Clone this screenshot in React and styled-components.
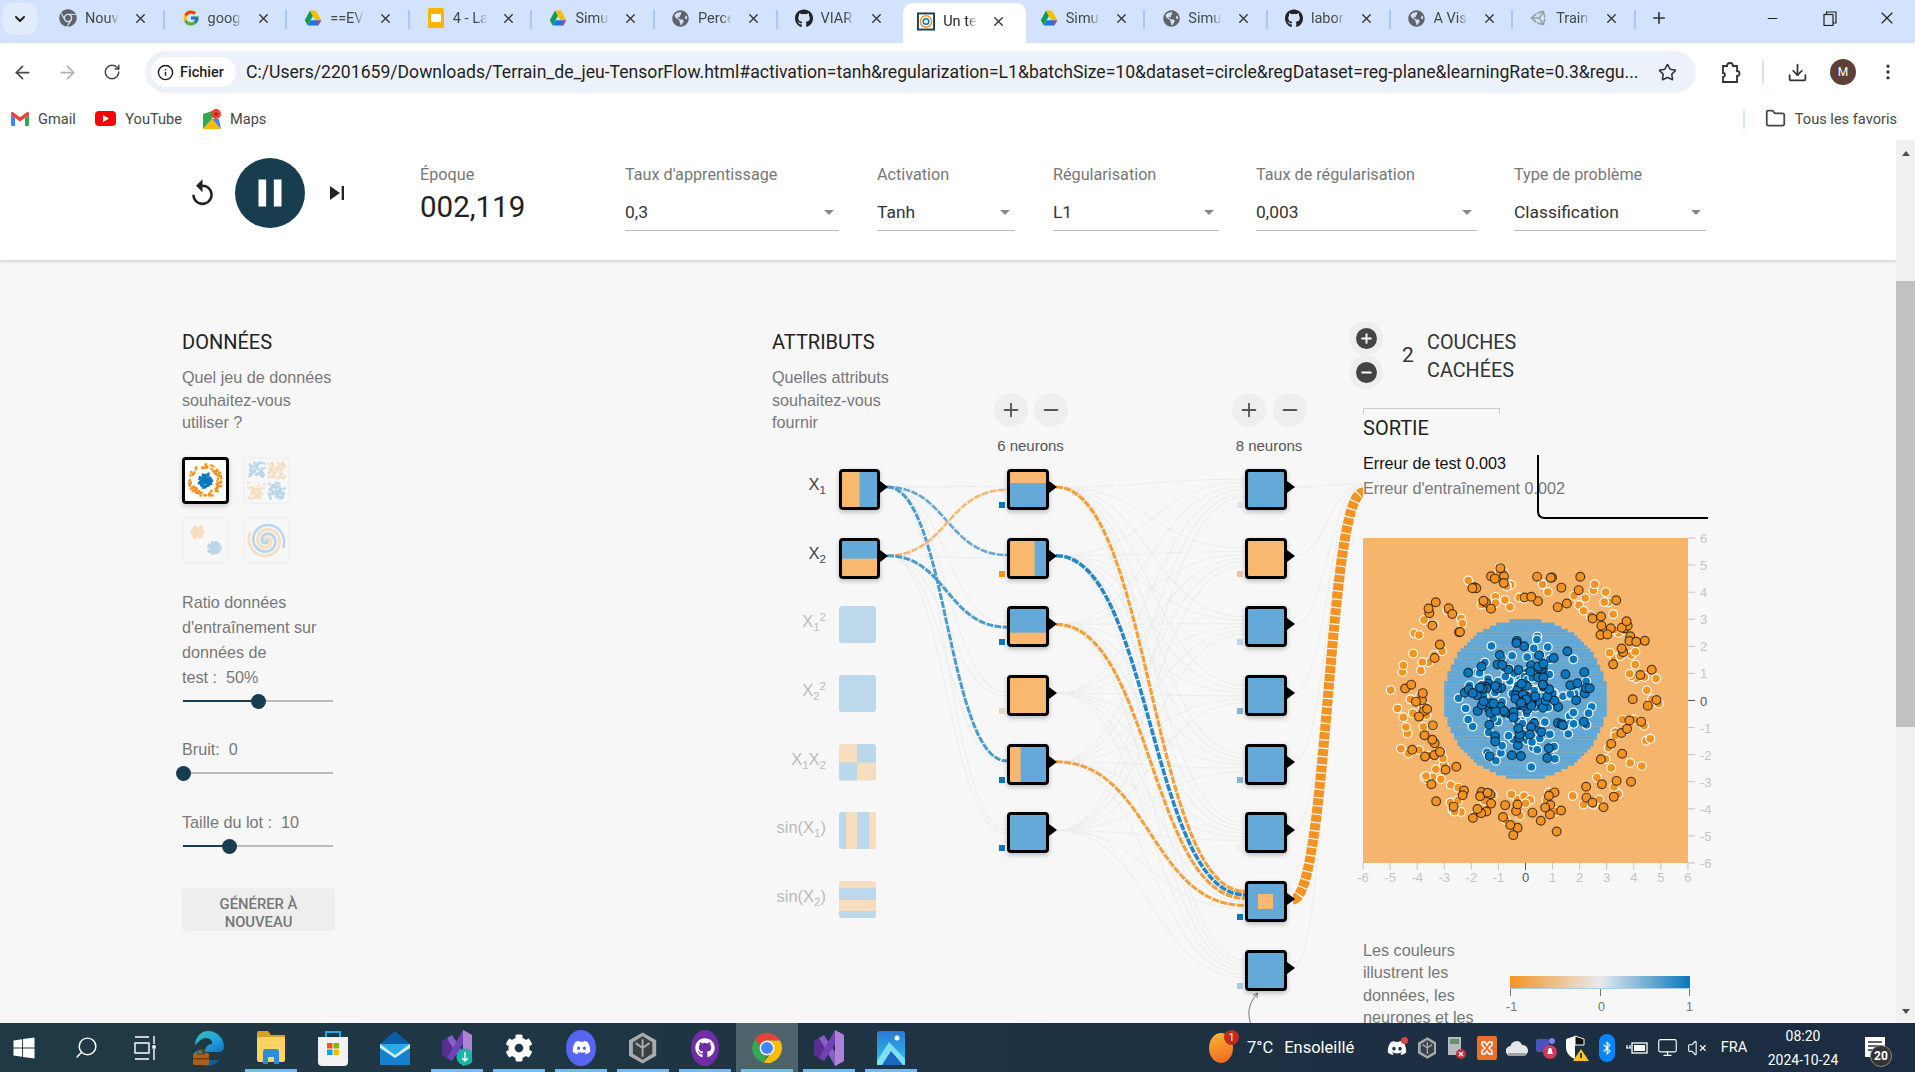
import React from "react";
import styled, { createGlobalStyle } from "styled-components";
import {
  ArrowLeft,
  ArrowRight,
  RotateCw,
  Star,
  Info,
  Download,
  MoreVertical,
  Folder,
  Plus,
  Minus,
  X as Close,
  ChevronDown,
  Search,
  VolumeX,
  Monitor,
} from "lucide-react";
import { FaGithub, FaDiscord, FaWindows, FaBluetoothB, FaUnity, FaChrome, FaCog, FaGlobeAmericas } from "react-icons/fa";
import { FcGoogle } from "react-icons/fc";
import { MdPause, MdReplay, MdSkipNext } from "react-icons/md";

const ORANGE = "#f8b86f";
const BLUE = "#64a9d7";
const DOT_ORANGE = "#f59322";
const DOT_BLUE = "#0877bd";

const seeded = (seed) => () => {
  seed = (seed * 16807) % 2147483647;
  return (seed - 1) / 2147483646;
};

const GlobalStyles = createGlobalStyle`
  html, body {
    margin: 0;
    height: 100%;
    overflow: hidden;
    background: #f7f7f7;
    font-family: "Liberation Sans", Arial, sans-serif;
  }
`;

/* browser chrome */

const Screen = styled.div`
  width: 1915px;
  height: 1072px;
  display: flex;
  flex-direction: column;
  overflow: hidden;
`;

const TabStrip = styled.div`
  height: 43px;
  flex: none;
  display: flex;
  align-items: stretch;
  background: #d3e3fd;
  position: relative;
`;

const TabSearch = styled.div`
  width: 34px;
  height: 32px;
  margin: 3px 8px 0 3px;
  border-radius: 10px;
  background: #e3ecfc;
  display: flex;
  align-items: center;
  justify-content: center;
`;

const Tab = styled.div`
  width: 122.6px;
  flex: none;
  position: relative;
  display: flex;
  align-items: center;
  padding: 0 0 7px 14px;
  box-sizing: border-box;
  font-family: Roboto, sans-serif;
  font-size: 14.5px;
  color: ${(p) => (p.$active ? "#1f1f1f" : "#474747")};
  ${(p) =>
    p.$active &&
    `background:#fff; border-radius:10px 10px 0 0; margin-top:3px; padding-bottom:4px;`}
  &::after {
    content: "";
    display: ${(p) => (p.$sep ? "block" : "none")};
    position: absolute;
    right: 3px;
    top: 10px;
    height: 19px;
    width: 2px;
    background: #a8c7fa;
  }
`;

const TabIcon = styled.span`
  width: 18px;
  height: 18px;
  flex: none;
  display: flex;
  align-items: center;
  justify-content: center;
  color: #5f6368;
`;

const TabTitle = styled.span`
  width: 34px;
  margin-left: 8px;
  overflow: hidden;
  white-space: nowrap;
  -webkit-mask-image: linear-gradient(90deg, #000 70%, transparent);
`;

const TabClose = styled.span`
  margin-left: 14px;
  display: flex;
  color: #333;
`;

const NewTab = styled.div`
  width: 28px;
  margin-left: 6px;
  padding-bottom: 7px;
  display: flex;
  align-items: center;
  justify-content: center;
  color: #333;
`;

const WindowButtons = styled.div`
  margin-left: auto;
  display: flex;
`;

const WindowButton = styled.div`
  width: 57px;
  padding-bottom: 7px;
  display: flex;
  align-items: center;
  justify-content: center;
  color: #222;
`;

const Toolbar = styled.div`
  height: 54px;
  flex: none;
  box-sizing: border-box;
  display: flex;
  align-items: center;
  padding: 4px 0 0 5px;
  background: #fff;
  color: #474747;
`;

const ToolButton = styled.div`
  width: 34px;
  height: 34px;
  flex: none;
  margin-left: ${(p) => p.$gap || 0}px;
  display: flex;
  align-items: center;
  justify-content: center;
  color: ${(p) => p.$color || "#474747"};
`;

const Omnibox = styled.div`
  width: 1551px;
  height: 42px;
  flex: none;
  margin-left: 16px;
  padding-left: 6px;
  box-sizing: border-box;
  border-radius: 21px;
  background: #edf2fa;
  display: flex;
  align-items: center;
`;

const SecurityChip = styled.div`
  width: 85px;
  height: 30px;
  flex: none;
  border-radius: 15px;
  background: #fff;
  display: flex;
  align-items: center;
  gap: 6px;
  padding-left: 6px;
  box-sizing: border-box;
  font: 500 14.5px Roboto, sans-serif;
  color: #1f1f1f;
`;

const Url = styled.div`
  width: 1394px;
  flex: none;
  margin-left: 10px;
  white-space: nowrap;
  overflow: hidden;
  font: 17.6px Roboto, sans-serif;
  color: #1f1f1f;
`;

const ToolDivider = styled.div`
  width: 2px;
  height: 24px;
  flex: none;
  margin-left: 14px;
  background: #d3e3fd;
`;

const Avatar = styled.div`
  width: 26px;
  height: 26px;
  flex: none;
  margin-left: 16px;
  border-radius: 50%;
  background: #5d4037;
  color: #fff;
  font: 12px Roboto, sans-serif;
  display: flex;
  align-items: center;
  justify-content: center;
`;

const BookmarkBar = styled.div`
  height: 43px;
  flex: none;
  display: flex;
  align-items: center;
  background: #fff;
  font: 14.6px Roboto, sans-serif;
  color: #474747;
  box-sizing: border-box;
`;

const Bookmark = styled.div`
  display: flex;
  align-items: center;
  gap: 9px;
  margin-left: ${(p) => p.$gap}px;
  margin-right: ${(p) => p.$end || 0}px;
`;

const BookmarkDivider = styled.div`
  width: 2px;
  height: 20px;
  margin-left: auto;
  background: #d3e3fd;
`;

/* page */

const PageArea = styled.div`
  flex: 1;
  min-height: 0;
  display: flex;
`;

const Page = styled.div`
  flex: 1;
  min-width: 0;
  overflow: hidden;
  background: #f7f7f7;
`;

const Scrollbar = styled.div`
  width: 19px;
  flex: none;
  background: #f1f1f1;
  display: flex;
  flex-direction: column;
  align-items: center;
`;

const ScrollArrow = styled.div`
  width: 0;
  height: 0;
  margin: ${(p) => (p.$down ? "auto 0 9px" : "11px 0 0")};
  border-left: 4px solid transparent;
  border-right: 4px solid transparent;
  ${(p) => (p.$down ? "border-top" : "border-bottom")}: 5px solid #505050;
`;

const ScrollThumb = styled.div`
  width: 100%;
  height: 446px;
  margin-top: 125px;
  background: #c1c1c1;
`;

const TopBar = styled.div`
  height: 120px;
  display: flex;
  align-items: flex-start;
  padding-left: 185px;
  background: #fff;
  box-shadow: 0 1px 4px rgba(0, 0, 0, 0.22);
  position: relative;
  font-family: Roboto, sans-serif;
`;

const ResetButton = styled.div`
  width: 34px;
  height: 106px;
  display: flex;
  align-items: center;
  justify-content: center;
  color: #222;
`;

const PlayButton = styled.div`
  width: 70px;
  height: 70px;
  margin: 18px 16px 0;
  border-radius: 50%;
  background: #183d4e;
  color: #fff;
  display: flex;
  align-items: center;
  justify-content: center;
`;

const StepButton = styled(ResetButton)`
  width: 32px;
`;

const Epoch = styled.div`
  width: 205px;
  margin-left: 67px;
  padding-top: 25px;
`;

const ControlLabel = styled.div`
  font-size: 16.2px;
  line-height: 20px;
  color: #777;
`;

const EpochValue = styled.div`
  margin-top: 4px;
  font-size: 29.5px;
  line-height: 36px;
  color: #222;
`;

const Dropdown = styled.div`
  width: ${(p) => p.$w}px;
  flex: none;
  margin-right: ${(p) => p.$gap || 0}px;
  padding-top: 25px;
`;

const DropdownValue = styled.div`
  position: relative;
  margin-top: 16px;
  height: 29px;
  font-size: 17.4px;
  line-height: 22px;
  color: #333;
  border-bottom: 1px solid #bbb;
  &::after {
    content: "";
    position: absolute;
    right: 5px;
    top: 9px;
    border-left: 5px solid transparent;
    border-right: 5px solid transparent;
    border-top: 5px solid #888;
  }
`;

const Main = styled.div`
  display: flex;
  align-items: flex-start;
  padding: 68px 0 0 182px;
`;

const Heading = styled.h4`
  margin: 0;
  height: 26px;
  font: 400 20px/28.500px Roboto, sans-serif;
  color: #222;
`;

const Intro = styled.p`
  margin: 12px 0 0;
  font-size: 16.200px;
  line-height: 22.500px;
  color: #777;
`;

const DataColumn = styled.div`
  width: 155px;
  flex: none;
`;

const ThumbGrid = styled.div`
  display: grid;
  grid-template-columns: 47px 47px;
  gap: 13px 14px;
  margin-top: 23.500px;
`;

const Thumb = styled.div`
  width: 47px;
  height: 47px;
  box-sizing: border-box;
  border-radius: 4px;
  background: ${(p) => (p.$selected ? "#fff" : "transparent")};
  border: ${(p) => (p.$selected ? "3px solid #000" : "2px solid #f1f1f1")};
  box-shadow: ${(p) => (p.$selected ? "0 2px 5px rgba(0,0,0,.2)" : "none")};
  svg {
    display: block;
    width: 100%;
    height: 100%;
    opacity: ${(p) => (p.$selected ? 1 : 0.25)};
  }
`;

const SliderLabel = styled.div`
  margin-top: ${(p) => p.$gap}px;
  font-size: 16.200px;
  line-height: 25px;
  color: #777;
`;

const SliderTrack = styled.div`
  position: relative;
  width: 150px;
  height: 16px;
  margin: 3.500px 0 0 1px;
  background: linear-gradient(#bbb, #bbb) center / 100% 2px no-repeat;
`;

const SliderFill = styled.div`
  position: absolute;
  left: 0;
  top: 7px;
  height: 2px;
  background: #183d4e;
  width: ${(p) => p.$value}%;
`;

const SliderThumb = styled.div`
  position: absolute;
  top: 0.500px;
  width: 15px;
  height: 15px;
  margin-left: -7.500px;
  border-radius: 50%;
  background: #183d4e;
  left: ${(p) => p.$value}%;
`;

const RegenButton = styled.div`
  width: 153px;
  height: 43px;
  margin-top: 34px;
  padding-top: 7px;
  box-sizing: border-box;
  border-radius: 3px;
  background: #eee;
  display: flex;
  align-items: center;
  justify-content: center;
  text-align: center;
  font: 500 14.800px/18px Roboto, sans-serif;
  color: #777;
`;

const Network = styled.div`
  position: relative;
  display: flex;
  align-items: flex-start;
  margin-left: 435px;
`;

const Links = styled.svg`
  position: absolute;
  left: 0;
  top: 0;
  overflow: visible;
`;

const FeatureColumn = styled.div`
  width: 221px;
  flex: none;
  position: relative;
`;

const FeatureIntro = styled.div`
  height: 141px;
  width: 120px;
`;

const FeatureList = styled.div`
  display: flex;
  flex-direction: column;
  gap: 27.700px;
`;

const FeatureRow = styled.div`
  height: 41px;
  display: flex;
  align-items: flex-start;
`;

const FeatureLabel = styled.div`
  width: 54px;
  margin-right: 13px;
  padding-top: 5px;
  text-align: right;
  white-space: nowrap;
  font-size: 16.500px;
  line-height: 20px;
  color: ${(p) => (p.$on ? "#444" : "#bbb")};
  sub,
  sup {
    font-size: 11.500px;
    line-height: 0;
  }
`;

const FadedNode = styled.div`
  width: 37px;
  height: 37px;
  border-radius: 3px;
  background: ${(p) => p.$fill};
  opacity: 0.4;
`;

const NodeBox = styled.div`
  position: relative;
  width: ${(p) => p.$w}px;
  height: 41px;
  flex: none;
  box-sizing: border-box;
  border: 3px solid #000;
  border-radius: 4px;
  background: ${(p) => p.$fill};
  box-shadow: 0 2px 5px rgba(0, 0, 0, 0.25);
  &::after {
    content: "";
    position: absolute;
    right: -11px;
    top: 9px;
    border-top: 6px solid transparent;
    border-bottom: 6px solid transparent;
    border-left: 8px solid #000;
  }
`;

const Core = styled.div`
  position: absolute;
  left: 10px;
  top: 10px;
  width: 15px;
  height: 15px;
  background: ${ORANGE};
  filter: blur(0.700px);
`;

const Bias = styled.div`
  position: absolute;
  left: -11px;
  bottom: -1px;
  width: 6px;
  height: 6px;
  background: ${(p) => p.$color};
`;

const LayerColumn = styled.div`
  width: ${(p) => p.$w}px;
  flex: none;
  margin-right: ${(p) => p.$gap}px;
  position: relative;
  padding-top: 65px;
`;

const LayerControls = styled.div`
  display: flex;
  justify-content: space-between;
  margin-left: 1px;
`;

const RoundButton = styled.div`
  width: 34px;
  height: 34px;
  border-radius: 50%;
  background: #eee;
  color: #555;
  display: flex;
  align-items: center;
  justify-content: center;
`;

const NeuronCount = styled.div`
  margin-top: 9px;
  text-align: center;
  font-size: 15px;
  line-height: 20px;
  color: #555;
`;

const NodeList = styled.div`
  display: flex;
  flex-direction: column;
  gap: 27.700px;
  margin: 13px 0 0 14px;
`;

const OutputColumn = styled.div`
  width: 360px;
  flex: none;
  margin: -7px 0 0 42px;
  position: relative;
`;

const HiddenHeader = styled.div`
  height: 68px;
  display: flex;
  align-items: center;
`;

const CircleStack = styled.div`
  width: 34px;
  display: flex;
  flex-direction: column;
`;

const CircleAction = styled(RoundButton)`
  color: #fff;
  span {
    width: 21px;
    height: 21px;
    border-radius: 50%;
    background: #444;
    display: flex;
    align-items: center;
    justify-content: center;
  }
`;

const LayerCount = styled.div`
  width: 38px;
  padding-left: 6px;
  text-align: center;
  font: 21px Roboto, sans-serif;
  color: #333;
`;

const LayerTitle = styled.div`
  padding-top: 4px;
  font: 19.800px/28px Roboto, sans-serif;
  color: #333;
`;

const OutputBody = styled.div`
  margin: 19px 0 0 14px;
`;

const Bracket = styled.div`
  width: 137px;
  height: 6px;
  box-sizing: border-box;
  border: 1px solid #ccc;
  border-bottom: 0;
`;

const Stats = styled.div`
  position: relative;
  margin-top: 10.500px;
  font-size: 16.200px;
  line-height: 25px;
`;

const StatLine = styled.div`
  color: ${(p) => (p.$train ? "#777" : "#111")};
  white-space: nowrap;
`;

const LossChart = styled.svg`
  position: absolute;
  left: 174px;
  top: 4px;
`;

const HeatMap = styled.svg`
  display: block;
  margin-top: 37.500px;
  overflow: visible;
  font-family: "Liberation Sans", Arial, sans-serif;
`;

const Legend = styled.div`
  display: flex;
  margin-top: 50.500px;
  height: 100px;
`;

const LegendText = styled.div`
  width: 147px;
  flex: none;
  font-size: 16.200px;
  line-height: 22.500px;
  color: #777;
`;

const LegendScale = styled.div`
  width: 180px;
  padding-top: 37px;
`;

const ColorBar = styled.div`
  height: 12px;
  background: linear-gradient(90deg, ${DOT_ORANGE}, #e8eaeb 50%, ${DOT_BLUE});
  border-bottom: 1px solid #a9cfe8;
`;

const ScaleTicks = styled.div`
  height: 7px;
  border-left: 1px solid #777;
  border-right: 1px solid #777;
  position: relative;
  &::after {
    content: "";
    position: absolute;
    left: 50%;
    top: 0;
    height: 7px;
    width: 1px;
    background: #777;
  }
`;

const ScaleLabels = styled.div`
  display: flex;
  justify-content: space-between;
  margin: 4px -3px 0 -4px;
  font-size: 12.500px;
  color: #777;
`;

/* taskbar */

const Taskbar = styled.div`
  height: 49px;
  flex: none;
  display: flex;
  align-items: stretch;
  background: linear-gradient(90deg, #203a45, #1c2c42);
  padding-right: 15px;
  font-family: Roboto, sans-serif;
  color: #fff;
`;

const SystemButton = styled.div`
  width: ${(p) => p.$w}px;
  flex: none;
  display: flex;
  align-items: center;
  justify-content: center;
`;

const MirroredSearch = styled(Search)`
  transform: scaleX(-1);
`;

const TaskApps = styled.div`
  display: flex;
  margin-left: 12px;
`;

const TaskApp = styled.div`
  width: 62px;
  flex: none;
  position: relative;
  display: flex;
  align-items: center;
  justify-content: center;
  background: ${(p) => (p.$current ? "#4c636c" : "transparent")};
  &::after {
    content: "";
    display: ${(p) => (p.$open ? "block" : "none")};
    position: absolute;
    left: 5px;
    right: 5px;
    bottom: 0;
    height: 3px;
    background: #76b9ed;
  }
`;

const Weather = styled.div`
  width: 174px;
  flex: none;
  margin-left: auto;
  display: flex;
  align-items: center;
  font-size: 16.500px;
  padding-left: 1px;
  box-sizing: border-box;
  span + span {
    margin-left: 11px;
  }
`;

const WeatherIcon = styled.div`
  position: relative;
  width: 24px;
  height: 30px;
  margin-right: 14px;
  border-radius: 50%;
  background: linear-gradient(160deg, #f7b733, #f0641e);
`;

const WeatherBadge = styled.div`
  position: absolute;
  right: -6px;
  top: -3px;
  width: 15px;
  height: 15px;
  border-radius: 50%;
  background: #c42b1c;
  font-size: 10px;
  line-height: 15px;
  text-align: center;
`;

const TrayIcon = styled.div`
  width: 30px;
  flex: none;
  position: relative;
  display: flex;
  align-items: center;
  justify-content: center;
`;

const Lang = styled.div`
  width: 44px;
  flex: none;
  align-self: center;
  text-align: center;
  font-size: 14.500px;
`;

const Clock = styled.div`
  width: 94px;
  flex: none;
  align-self: center;
  text-align: center;
  font-size: 14px;
  line-height: 24px;
`;

const Notice = styled.div`
  width: 50px;
  flex: none;
  position: relative;
  display: flex;
  align-items: center;
  justify-content: center;
`;

const NoticeBadge = styled.div`
  position: absolute;
  left: 20px;
  top: 22px;
  width: 22px;
  height: 22px;
  border-radius: 50%;
  border: 1px solid #888;
  box-sizing: border-box;
  background: #333;
  font: 700 12px/20px Roboto, sans-serif;
  text-align: center;
`;

/* drawings */

const Drive = ({ size = 18 }) => (
  <svg width={size} height={size} viewBox="0 0 24 22">
    <polygon fill="#0f9d58" points="8,1 1,14 5,21 12,8" />
    <polygon fill="#fbbc04" points="8,1 16,1 23,14 15,14" />
    <polygon fill="#1a73e8" points="5,21 19,21 23,14 9,14" />
    <polygon fill="#ea4335" points="19,21 23,14 19,14 16,21" opacity="0.6" />
  </svg>
);

const Slides = () => (
  <svg width="16" height="20" viewBox="0 0 16 20">
    <rect width="16" height="20" rx="2" fill="#f9b400" />
    <rect x="3" y="6" width="10" height="8" fill="#fff" />
  </svg>
);

const PlaygroundIcon = () => (
  <svg width="19" height="19" viewBox="0 0 19 19">
    <rect width="19" height="19" fill="#183d4e" />
    <rect x="2" y="2" width="15" height="15" fill="#fff" />
    <circle cx="9.500" cy="9.500" r="6" fill="none" stroke="#f59322" strokeWidth="1.600" />
    <circle cx="9.500" cy="9.500" r="3" fill="none" stroke="#0877bd" strokeWidth="1.600" />
  </svg>
);

const RestoreIcon = () => (
  <svg width="14" height="15" viewBox="0 0 14 15" fill="none" stroke="#222" strokeWidth="1.200">
    <rect x="1" y="3.500" width="9" height="11" />
    <path d="M3.500 3.500V1H13V12H10" />
  </svg>
);

const ExtensionIcon = () => (
  <svg width="22" height="24" viewBox="0 0 22 24" fill="none" stroke="#333" strokeWidth="1.800">
    <path d="M3 6h4a3 3 0 0 1 6 0h4v5a2.500 2.500 0 0 1 0 5v6H3v-5a2 2 0 0 0 0-4z" />
  </svg>
);

const GmailIcon = () => (
  <svg width="18" height="14" viewBox="0 0 18 14">
    <path fill="#4285f4" d="M0 3v10a1 1 0 0 0 1 1h3V6z" />
    <path fill="#34a853" d="M18 3v10a1 1 0 0 1-1 1h-3V6z" />
    <path fill="#ea4335" d="M0 3V1.500C0 .3 1.400-.4 2.400.4L9 5.300 15.600.4C16.600-.4 18 .3 18 1.500V3l-9 6.600z" />
  </svg>
);

const YoutubeIcon = () => (
  <svg width="21" height="15" viewBox="0 0 21 15">
    <rect width="21" height="15" rx="4" fill="#f00" />
    <polygon fill="#fff" points="8,4 14,7.500 8,11" />
  </svg>
);

const MapsIcon = () => (
  <svg width="18" height="20" viewBox="0 0 18 20">
    <polygon fill="#34a853" points="0,5 9,2 9,10 0,20" />
    <polygon fill="#fbbc04" points="0,20 9,10 18,20" />
    <polygon fill="#4285f4" points="9,10 16,10 18,20" />
    <circle cx="13" cy="5" r="5" fill="#ea4335" />
    <circle cx="13" cy="5" r="1.800" fill="#a52714" />
  </svg>
);

const EdgeIcon = () => (
  <svg width="32" height="36" viewBox="0 0 32 36">
    <defs>
      <linearGradient id="edgeSwirl" x1="0" y1="0" x2="0.4" y2="1">
        <stop offset="0" stopColor="#35c1b0" />
        <stop offset="0.5" stopColor="#1f9fe0" />
        <stop offset="1" stopColor="#0c5fa8" />
      </linearGradient>
    </defs>
    <path
      fill="url(#edgeSwirl)"
      d="M15 1C24 1 31 8 31 17c0 3-2 5-6 5H12c0-5 3-8 7-8 1-3-2-6-6-6-5 0-9 5-11 8C2 8 7 1 15 1zM9 20c0 7 5 12 17 10-3 4-7 6-11 6-8 0-13-5-14-12 1-3 4-4 8-4z"
    />
    <rect x="0" y="23" width="16" height="12" rx="1.500" fill="#a8601c" />
    <rect x="5" y="20" width="6" height="4" fill="none" stroke="#7a4510" strokeWidth="1.500" />
    <rect x="0" y="28" width="16" height="1.500" fill="#6e3f10" />
  </svg>
);

const ExplorerIcon = () => (
  <svg width="30" height="36" viewBox="0 0 30 36">
    <path fill="#d99f23" d="M1 3a2 2 0 0 1 2-2h9l3 4h14v8H1z" />
    <rect x="1" y="7" width="28" height="25" rx="2" fill="#fcd462" />
    <path fill="#2a8fd8" d="M7 34V22a3 3 0 0 1 3-3h10a3 3 0 0 1 3 3v12h-5v-7h-6v7z" />
  </svg>
);

const StoreIcon = () => (
  <svg width="30" height="36" viewBox="0 0 30 36">
    <path fill="none" stroke="#2aa4e6" strokeWidth="2" d="M8 7V2h14v5" />
    <path fill="#f2f2f2" d="M0 7h30v25a4 4 0 0 1-4 4H4a4 4 0 0 1-4-4z" />
    <rect x="9" y="13" width="5.500" height="5.500" fill="#f25022" />
    <rect x="15.500" y="13" width="5.500" height="5.500" fill="#7fba00" />
    <rect x="9" y="19.500" width="5.500" height="5.500" fill="#00a4ef" />
    <rect x="15.500" y="19.500" width="5.500" height="5.500" fill="#ffb900" />
  </svg>
);

const MailIcon = () => (
  <svg width="30" height="34" viewBox="0 0 30 34">
    <polygon fill="#0a5ea8" points="15,0 30,13 30,18 0,18 0,13" />
    <rect y="13" width="30" height="21" fill="#29a8ea" />
    <polygon fill="#d9f1fb" points="0,13 15,24 30,13 30,20 15,30 0,20" opacity="0.95" />
    <polygon fill="#1381cc" points="0,34 0,17 15,27 30,17 30,34" />
  </svg>
);

const VsIcon = ({ badge }) => (
  <svg width="30" height="36" viewBox="0 0 30 36">
    <polygon fill="#5c2d91" points="0,11 5,8 14,18 5,28 0,25" />
    <polygon fill="#865fc5" points="21,0 30,5 30,31 21,36 5,8 10,5 21,22" />
    <polygon fill="#b180d7" points="21,0 30,5 30,31 21,36" />
    <polygon fill="#6f42b5" points="5,28 21,0 21,14 10,31" />
    {badge && <circle cx="23" cy="27" r="8.500" fill="#19b5a5" />}
    {badge && <path d="M23 22v9m-3-3 3 3 3-3" fill="none" stroke="#fff" strokeWidth="1.400" />}
  </svg>
);

const RoundBadge = styled.div`
  width: ${(p) => p.$w}px;
  height: ${(p) => p.$h}px;
  border-radius: 50%;
  background: ${(p) => p.$color};
  display: flex;
  align-items: center;
  justify-content: center;
  color: #fff;
`;

const UnityHex = ({ size = 32 }) => (
  <svg width={size * 0.85} height={size} viewBox="0 0 28 32">
    <polygon fill="#a7abae" points="14,0 28,8 28,24 14,32 0,24 0,8" />
    <polygon fill="#3a4146" points="14,4 24,10 24,22 14,28 4,22 4,10" />
    <path d="M14 7v18M7 11l7 5 7-5" fill="none" stroke="#a7abae" strokeWidth="2" />
  </svg>
);

const ChromeIcon = () => (
  <svg width="32" height="36" viewBox="0 0 32 32">
    <path fill="#ea4335" d="M16 1a15 15 0 0 1 13 7.500H16a7.500 7.500 0 0 0-7 5L3.500 8A15 15 0 0 1 16 1z" />
    <path fill="#34a853" d="M3.500 8 9 13.500a7.500 7.500 0 0 0 7 10l-3.600 7.100A15 15 0 0 1 3.500 8z" />
    <path fill="#fbbc04" d="M29 8.500A15 15 0 0 1 12.400 30.600l6.100-7.500A7.500 7.500 0 0 0 22 13l-6-4.500z" />
    <circle cx="16" cy="16" r="7.500" fill="#fff" />
    <circle cx="16" cy="16" r="6" fill="#4285f4" />
  </svg>
);

const PhotosIcon = () => (
  <svg width="28" height="34" viewBox="0 0 28 34">
    <defs>
      <linearGradient id="photosBg" x1="0" y1="0" x2="0" y2="1">
        <stop offset="0" stopColor="#2a7ad4" />
        <stop offset="1" stopColor="#2bc4ec" />
      </linearGradient>
    </defs>
    <rect width="28" height="34" rx="3" fill="url(#photosBg)" />
    <circle cx="20" cy="7" r="2.500" fill="#fff" />
    <polygon fill="#7fe0f5" points="0,30 12,11 28,28 28,34 0,34" />
    <polygon fill="#1b68c2" points="5,34 14,20 26,34" />
  </svg>
);

const TinyDoc = () => (
  <svg width="20" height="24" viewBox="0 0 20 24">
    <rect x="1" y="1" width="13" height="18" fill="#b4bcc0" />
    <rect x="3" y="3" width="9" height="5" fill="#6d8a6d" />
    <circle cx="14" cy="18" r="5" fill="#c8313a" />
    <path d="m12 16 4 4m0-4-4 4" stroke="#fff" strokeWidth="1.200" />
  </svg>
);

const Xampp = () => (
  <svg width="20" height="24" viewBox="0 0 20 24">
    <rect width="20" height="24" rx="2" fill="#e8702a" />
    <path d="M5 6h3l2 3 2-3h3v3l-3 3 3 3v3h-3l-2-3-2 3H5v-3l3-3-3-3z" fill="none" stroke="#fff" strokeWidth="1.600" />
  </svg>
);

const CloudIcon = () => (
  <svg width="22" height="16" viewBox="0 0 22 16">
    <path fill="#e6e6e6" d="M5 16a5 5 0 0 1-.5-10A6 6 0 0 1 16 5a5.500 5.500 0 0 1 1 11z" />
    <path fill="#9aa0a6" d="M2 13h18v1a2 2 0 0 1-2 2H4a2 2 0 0 1-2-2z" />
  </svg>
);

const TeamsIcon = () => (
  <svg width="24" height="24" viewBox="0 0 24 24">
    <rect x="1" y="3" width="13" height="13" rx="2" fill="#4b53bc" />
    <circle cx="17" cy="5" r="3" fill="#7b83eb" />
    <circle cx="15" cy="16" r="7" fill="#d13a5c" />
    <path d="M12 18h6l-1-2v-2a2 2 0 0 0-4 0v2z" fill="#fff" />
  </svg>
);

const ShieldIcon = () => (
  <svg width="24" height="26" viewBox="0 0 24 26">
    <path fill="#fff" d="M10 1 1 4v8c0 6 4 10 9 12z" />
    <path fill="#111" d="m10 1 9 3v6h-9z" stroke="#fff" strokeWidth="1" />
    <polygon fill="#f7c325" points="16,14 24,26 8,26" />
    <rect x="15.300" y="18" width="1.500" height="5" fill="#111" />
  </svg>
);

const BluetoothTile = styled.div`
  width: 16px;
  height: 28px;
  border-radius: 8px;
  background: #0a84ff;
  display: flex;
  align-items: center;
  justify-content: center;
`;

const PowerIcon = () => (
  <svg width="22" height="16" viewBox="0 0 22 16">
    <rect x="6" y="3" width="15" height="10" fill="none" stroke="#fff" strokeWidth="1.300" />
    <rect x="8" y="5" width="11" height="6" fill="#fff" />
    <path d="M0 8h5M1 5v3m3-3v3" stroke="#fff" strokeWidth="1.200" />
  </svg>
);

const RedDot = styled.span`
  position: absolute;
  right: 4px;
  top: 14px;
  width: 7px;
  height: 7px;
  border-radius: 50%;
  background: #e0443e;
`;

/* data */

const rowY = [469, 537.7, 606.4, 675.1, 743.8, 812.5, 881.2, 949.9];

const linkPath = (x1, y1, x2, y2) => {
  const mid = (x1 + x2) / 2;
  return `M${x1} ${y1}C${mid} ${y1} ${mid} ${y2} ${x2} ${y2}`;
};

const inputLinks = {
  "0-1": [BLUE, 2.6],
  "0-4": ["#4a9ccf", 3],
  "1-0": [ORANGE, 2.6],
  "1-2": ["#4a9ccf", 3],
};

const hiddenLinks = {
  "0-6": ["#f59f3a", 3.2],
  "1-6": ["#2488c8", 3.6],
  "2-6": ["#f59f3a", 3.2],
  "4-6": ["#f59f3a", 3],
};

const buildLinks = () => {
  const list = [];
  const layer = (srcCount, dstCount, srcX, dstX, colored) => {
    for (let s = 0; s < srcCount; s++) {
      for (let d = 0; d < dstCount; d++) {
        const y1 = rowY[s] + 18;
        const y2 = rowY[d] + 19 + (s - (srcCount - 1) / 2) * 3.5;
        const hit = colored[`${s}-${d}`];
        list.push({
          d: linkPath(srcX, y1, dstX, y2),
          color: hit ? hit[0] : "#ebeced",
          width: hit ? hit[1] : 1.1,
          hit: !!hit,
        });
      }
    }
  };
  layer(2, 6, 887, 1007, inputLinks);
  layer(6, 8, 1056, 1245, hiddenLinks);
  for (let s = 0; s < 8; s++) {
    const hit = s === 6;
    list.push({
      d: linkPath(1293, rowY[s] + 18, 1363, 484 + s * 1.4),
      color: hit ? DOT_ORANGE : "#ebeced",
      width: hit ? 10 : 1.1,
      hit,
    });
  }
  return list.sort((a, b) => a.hit - b.hit);
};

const LINKS = buildLinks();

const HEAT_ROWS = Array.from({ length: 100 }, (_, r) => {
  const cell = 3.25;
  const y = (r + 0.5) * cell - 161;
  const half = Math.abs(y) < 80 ? 81.5 * Math.sqrt(1 - (y * y) / 6400) : 0;
  const cells = Math.round(half / cell);
  return { y: r * cell, w: cells * 2 * cell, x: 162.5 - cells * cell };
}).filter((row) => row.w > 0);

const buildPoints = () => {
  const rand = seeded(48271);
  const points = [];
  for (let i = 0; i < 500; i++) {
    const inner = i % 2 === 0;
    const r = inner ? rand() * 2.5 : 3.5 + rand() * 1.5;
    const a = rand() * Math.PI * 2;
    points.push({
      x: 162.5 + r * Math.cos(a) * 27.08,
      y: 162.5 + r * Math.sin(a) * 27.08,
      fill: inner ? DOT_BLUE : DOT_ORANGE,
      test: rand() > 0.5,
    });
  }
  return points.sort((a, b) => a.test - b.test);
};

const POINTS = buildPoints();

const thumbDots = (kind) => {
  const rand = seeded(7 + kind.length * 131);
  const dots = [];
  const total = kind === "spiral" ? 320 : 200;
  for (let i = 0; i < total; i++) {
    const a = rand() * Math.PI * 2;
    const side = i % 2 === 0;
    if (kind === "circle") {
      const r = side ? rand() * 7.5 : 11.5 + rand() * 5;
      dots.push([20 + r * Math.cos(a), 20 + r * Math.sin(a), side]);
    } else if (kind === "xor") {
      const px = 3 + rand() * 15 + (rand() > 0.5 ? 19 : 0);
      const py = 3 + rand() * 15 + (rand() > 0.5 ? 19 : 0);
      dots.push([px, py, px < 20 === py < 20]);
    } else if (kind === "gauss") {
      const r = rand() * 6;
      dots.push(side ? [28 + r * Math.cos(a), 27 + r * Math.sin(a), true] : [12 + r * Math.cos(a), 12 + r * Math.sin(a), false]);
    } else {
      const t = (i / total) * 13;
      const r = t * 1.3;
      const off = side ? 0 : Math.PI;
      dots.push([20 + r * Math.cos(t + off), 20 + r * Math.sin(t + off), side]);
    }
  }
  return dots;
};

const TABS = [
  { title: "Nouv", icon: <FaChrome size={18} /> },
  { title: "goog", icon: <FcGoogle size={18} /> },
  { title: "==EV", icon: <Drive /> },
  { title: "4 - La", icon: <Slides /> },
  { title: "Simu", icon: <Drive /> },
  { title: "Perce", icon: <FaGlobeAmericas size={17} /> },
  { title: "VIAR", icon: <FaGithub size={19} color="#222" /> },
  { title: "Un te", icon: <PlaygroundIcon />, active: true },
  { title: "Simu", icon: <Drive /> },
  { title: "Simu", icon: <FaGlobeAmericas size={17} /> },
  { title: "labor", icon: <FaGithub size={19} color="#222" /> },
  { title: "A Vis", icon: <FaGlobeAmericas size={17} /> },
  { title: "Train", icon: <FaUnity size={18} color="#9aa0a6" /> },
];

const half = (deg, a, b, at = 50) => `linear-gradient(${deg}deg, ${a} ${at - 1}%, ${b} ${at + 2}%)`;

const FEATURES = [
  { label: <>X<sub>1</sub></>, fill: half(90, ORANGE, BLUE), on: true },
  { label: <>X<sub>2</sub></>, fill: half(180, BLUE, ORANGE), on: true },
  { label: <>X<sub>1</sub><sup>2</sup></>, fill: BLUE },
  { label: <>X<sub>2</sub><sup>2</sup></>, fill: BLUE },
  {
    label: <>X<sub>1</sub>X<sub>2</sub></>,
    fill: `linear-gradient(90deg, ${ORANGE} 50%, ${BLUE} 50%) top / 100% 50% no-repeat, linear-gradient(90deg, ${BLUE} 50%, ${ORANGE} 50%) bottom / 100% 50% no-repeat`,
  },
  {
    label: <>sin(X<sub>1</sub>)</>,
    fill: `linear-gradient(90deg, ${BLUE} 20%, ${ORANGE} 20% 50%, ${BLUE} 50% 80%, ${ORANGE} 80%)`,
  },
  {
    label: <>sin(X<sub>2</sub>)</>,
    fill: `linear-gradient(180deg, ${ORANGE} 20%, ${BLUE} 20% 50%, ${ORANGE} 50% 80%, ${BLUE} 80%)`,
  },
];

const LAYER_ONE = [
  { fill: half(180, ORANGE, BLUE, 31), bias: DOT_BLUE },
  { fill: half(90, ORANGE, BLUE, 68), bias: DOT_ORANGE },
  { fill: half(180, BLUE, ORANGE, 67), bias: DOT_BLUE },
  { fill: ORANGE, bias: "#e8d6c0" },
  { fill: half(90, ORANGE, BLUE, 29), bias: DOT_BLUE },
  { fill: BLUE, bias: DOT_BLUE },
];

const LAYER_TWO = [
  { fill: BLUE, bias: "#dfe6ea" },
  { fill: ORANGE, bias: "#ecc79e" },
  { fill: BLUE, bias: "#bcd4e3" },
  { fill: BLUE, bias: "#85b3d4" },
  { fill: BLUE, bias: "#85b3d4" },
  { fill: BLUE, bias: "#ebeff1" },
  { fill: BLUE, bias: DOT_BLUE, core: true },
  { fill: BLUE, bias: "#a9cbe0" },
];

const TICKS = [-6, -5, -4, -3, -2, -1, 0, 1, 2, 3, 4, 5, 6];

/* pieces */

const Node = ({ w = 42, fill, bias, core }) => (
  <NodeBox $w={w} $fill={fill}>
    {core && <Core />}
    {bias && <Bias $color={bias} />}
  </NodeBox>
);

const Select = ({ label, value, w, gap }) => (
  <Dropdown $w={w} $gap={gap}>
    <ControlLabel>{label}</ControlLabel>
    <DropdownValue>{value}</DropdownValue>
  </Dropdown>
);

const Slider = ({ value }) => (
  <SliderTrack>
    <SliderFill $value={value} />
    <SliderThumb $value={value} />
  </SliderTrack>
);

const DataThumb = ({ kind, selected }) => (
  <Thumb $selected={selected}>
    <svg viewBox="0 0 40 40">
      {thumbDots(kind).map(([x, y, blue], i) => (
        <rect key={i} x={x - 1.1} y={y - 1.1} width="2.200" height="2.200" fill={blue ? DOT_BLUE : DOT_ORANGE} />
      ))}
    </svg>
  </Thumb>
);

const Layer = ({ nodes, width, gap, count }) => (
  <LayerColumn $w={width} $gap={gap}>
    <LayerControls>
      <RoundButton><Plus size={22} /></RoundButton>
      <RoundButton><Minus size={22} /></RoundButton>
    </LayerControls>
    <NeuronCount>{count} neurons</NeuronCount>
    <NodeList>
      {nodes.map((n, i) => (
        <Node key={i} {...n} />
      ))}
    </NodeList>
  </LayerColumn>
);

const Output = () => (
  <HeatMap width="350" height="350">
    <rect width="325" height="325" fill="#f6b56c" />
    {HEAT_ROWS.map((row) => (
      <rect key={row.y} x={row.x} y={row.y} width={row.w} height="3.400" fill="#62a8d6" />
    ))}
    {POINTS.map((p, i) => (
      <circle
        key={i}
        cx={p.x}
        cy={p.y}
        r="4.400"
        fill={p.fill}
        stroke={p.test ? "#000" : "#fff"}
        strokeOpacity={p.test ? 0.65 : 0.95}
        strokeWidth="1.200"
      />
    ))}
    {TICKS.map((t) => {
      const at = 162.5 + t * 27.08;
      const color = t === 0 ? "#555" : "#c4c4c4";
      return (
        <g key={t} fill={color} fontSize="13">
          <line x1={at} x2={at} y1="325" y2="332" stroke={color} />
          <text x={at} y="344" textAnchor="middle">{t}</text>
          <line y1={325 - at} y2={325 - at} x1="325" x2="332" stroke={color} />
          <text x="337" y={325 - at + 5}>{t}</text>
        </g>
      );
    })}
  </HeatMap>
);

const App = () => {
  return (
    <Screen>
      <GlobalStyles />
      <TabStrip>
        <TabSearch><ChevronDown size={16} strokeWidth={3} color="#222" /></TabSearch>
        {TABS.map((tab, i) => (
          <Tab key={i} $active={tab.active} $sep={!tab.active && !(TABS[i + 1] && TABS[i + 1].active)}>
            <TabIcon>{tab.icon}</TabIcon>
            <TabTitle>{tab.title}</TabTitle>
            <TabClose><Close size={15} strokeWidth={2.2} /></TabClose>
          </Tab>
        ))}
        <NewTab><Plus size={18} strokeWidth={2.2} /></NewTab>
        <WindowButtons>
          <WindowButton><Minus size={15} strokeWidth={1.6} /></WindowButton>
          <WindowButton><RestoreIcon /></WindowButton>
          <WindowButton><Close size={20} strokeWidth={1.4} /></WindowButton>
        </WindowButtons>
      </TabStrip>

      <Toolbar>
        <ToolButton><ArrowLeft size={21} /></ToolButton>
        <ToolButton $gap={11} $color="#aeb1b5"><ArrowRight size={21} /></ToolButton>
        <ToolButton $gap={11}><RotateCw size={18} /></ToolButton>
        <Omnibox>
          <SecurityChip><Info size={17} color="#1f1f1f" />Fichier</SecurityChip>
          <Url>C:/Users/2201659/Downloads/Terrain_de_jeu-TensorFlow.html#activation=tanh&amp;regularization=L1&amp;batchSize=10&amp;dataset=circle&amp;regDataset=reg-plane&amp;learningRate=0.3&amp;regu...</Url>
          <ToolButton $gap={10}><Star size={19} color="#333" /></ToolButton>
        </Omnibox>
        <ToolButton $gap={18}><ExtensionIcon /></ToolButton>
        <ToolDivider />
        <ToolButton $gap={16}><Download size={21} color="#333" /></ToolButton>
        <Avatar>M</Avatar>
        <ToolButton $gap={15}><MoreVertical size={20} color="#333" /></ToolButton>
      </Toolbar>

      <BookmarkBar>
        <Bookmark $gap={11}><GmailIcon />Gmail</Bookmark>
        <Bookmark $gap={19.5}><YoutubeIcon />YouTube</Bookmark>
        <Bookmark $gap={21}><MapsIcon />Maps</Bookmark>
        <BookmarkDivider />
        <Bookmark $gap={20} $end={18}><Folder size={21} />Tous les favoris</Bookmark>
      </BookmarkBar>

      <PageArea>
        <Page>
          <TopBar>
            <ResetButton><MdReplay size={31} /></ResetButton>
            <PlayButton><MdPause size={46} /></PlayButton>
            <StepButton><MdSkipNext size={28} /></StepButton>
            <Epoch>
              <ControlLabel>Époque</ControlLabel>
              <EpochValue>002,119</EpochValue>
            </Epoch>
            <Select label="Taux d'apprentissage" value="0,3" w={214} gap={38} />
            <Select label="Activation" value="Tanh" w={138} gap={38} />
            <Select label="Régularisation" value="L1" w={166} gap={37} />
            <Select label="Taux de régularisation" value="0,003" w={221} gap={37} />
            <Select label="Type de problème" value="Classification" w={192} />
          </TopBar>

          <Main>
            <DataColumn>
              <Heading>DONNÉES</Heading>
              <Intro>Quel jeu de données souhaitez-vous utiliser ?</Intro>
              <ThumbGrid>
                <DataThumb kind="circle" selected />
                <DataThumb kind="xor" />
                <DataThumb kind="gauss" />
                <DataThumb kind="spiral" />
              </ThumbGrid>
              <SliderLabel $gap={25.5}>
                Ratio données<br />d'entraînement sur<br />données de<br />test :&nbsp; 50%
              </SliderLabel>
              <Slider value={50} />
              <SliderLabel $gap={27.5}>Bruit:&nbsp; 0</SliderLabel>
              <Slider value={0} />
              <SliderLabel $gap={28.5}>Taille du lot :&nbsp; 10</SliderLabel>
              <Slider value={31} />
              <RegenButton>GÉNÉRER À<br />NOUVEAU</RegenButton>
            </DataColumn>

            <Network>
              <Links width="1" height="1">
                <g transform="translate(-772 -328)" fill="none">
                  {LINKS.map((link, i) => (
                    <path
                      key={i}
                      d={link.d}
                      stroke={link.color}
                      strokeWidth={link.width}
                      strokeDasharray={link.hit ? "7 1.3" : "9 1"}
                    />
                  ))}
                  <path d="M1252 1026C1246 1014 1249 1003 1257 994" stroke="#777" strokeWidth="1" />
                  <path d="M1253 995l4.500-2 -.5 5" stroke="#777" strokeWidth="1" />
                </g>
              </Links>

              <FeatureColumn>
                <FeatureIntro>
                  <Heading>ATTRIBUTS</Heading>
                  <Intro>Quelles attributs souhaitez-vous fournir</Intro>
                </FeatureIntro>
                <FeatureList>
                  {FEATURES.map((f, i) => (
                    <FeatureRow key={i}>
                      <FeatureLabel $on={f.on}>{f.label}</FeatureLabel>
                      {f.on ? <Node w={41} fill={f.fill} /> : <FadedNode $fill={f.fill} />}
                    </FeatureRow>
                  ))}
                </FeatureList>
              </FeatureColumn>

              <Layer nodes={LAYER_ONE} width={75} gap={163} count={6} />
              <Layer nodes={LAYER_TWO} width={76} gap={0} count={8} />

              <OutputColumn>
                <HiddenHeader>
                  <CircleStack>
                    <CircleAction><span><Plus size={15} strokeWidth={3} /></span></CircleAction>
                    <CircleAction><span><Minus size={15} strokeWidth={3} /></span></CircleAction>
                  </CircleStack>
                  <LayerCount>2</LayerCount>
                  <LayerTitle>COUCHES<br />CACHÉES</LayerTitle>
                </HiddenHeader>
                <OutputBody>
                  <Bracket />
                  <Heading>SORTIE</Heading>
                  <Stats>
                    <StatLine>Erreur de test 0.003</StatLine>
                    <StatLine $train>Erreur d'entraînement 0.002</StatLine>
                    <LossChart width="172" height="66" fill="none">
                      <path d="M1 0V56Q1 63 8 63H171" stroke="#000" strokeWidth="2" />
                    </LossChart>
                  </Stats>
                  <Output />
                  <Legend>
                    <LegendText>Les couleurs illustrent les données, les neurones et les</LegendText>
                    <LegendScale>
                      <ColorBar />
                      <ScaleTicks />
                      <ScaleLabels><span>-1</span><span>0</span><span>1</span></ScaleLabels>
                    </LegendScale>
                  </Legend>
                </OutputBody>
              </OutputColumn>
            </Network>
          </Main>
        </Page>
        <Scrollbar>
          <ScrollArrow />
          <ScrollThumb />
          <ScrollArrow $down />
        </Scrollbar>
      </PageArea>

      <Taskbar>
        <SystemButton $w={48}><FaWindows size={24} /></SystemButton>
        <SystemButton $w={76}><MirroredSearch size={25} strokeWidth={1.4} /></SystemButton>
        <SystemButton $w={42}>
          <svg width="22" height="26" viewBox="0 0 22 26" fill="none" stroke="#fff" strokeWidth="1.400">
            <path d="M1 2h14M1 24h14M1 8h14v10H1zM20 1v8M20 14v11" />
            <rect x="19" y="11" width="2" height="2" fill="#fff" />
          </svg>
        </SystemButton>
        <TaskApps>
          <TaskApp><EdgeIcon /></TaskApp>
          <TaskApp $open><ExplorerIcon /></TaskApp>
          <TaskApp><StoreIcon /></TaskApp>
          <TaskApp><MailIcon /></TaskApp>
          <TaskApp $open><VsIcon badge /></TaskApp>
          <TaskApp $open><FaCog size={28} /></TaskApp>
          <TaskApp $open><RoundBadge $w={30} $h={36} $color="#5865f2"><FaDiscord size={19} /></RoundBadge></TaskApp>
          <TaskApp $open><UnityHex /></TaskApp>
          <TaskApp $open><RoundBadge $w={28} $h={36} $color="#6f2da8"><FaGithub size={20} /></RoundBadge></TaskApp>
          <TaskApp $open $current><ChromeIcon /></TaskApp>
          <TaskApp $open><VsIcon /></TaskApp>
          <TaskApp $open><PhotosIcon /></TaskApp>
        </TaskApps>
        <Weather>
          <WeatherIcon><WeatherBadge>1</WeatherBadge></WeatherIcon>
          <span>7°C</span>
          <span>Ensoleillé</span>
        </Weather>
        <TrayIcon><FaDiscord size={20} color="#fff" /><RedDot /></TrayIcon>
        <TrayIcon><UnityHex size={22} /></TrayIcon>
        <TrayIcon><TinyDoc /></TrayIcon>
        <TrayIcon><Xampp /></TrayIcon>
        <TrayIcon><CloudIcon /></TrayIcon>
        <TrayIcon><TeamsIcon /></TrayIcon>
        <TrayIcon><ShieldIcon /></TrayIcon>
        <TrayIcon><BluetoothTile><FaBluetoothB size={14} /></BluetoothTile></TrayIcon>
        <TrayIcon><PowerIcon /></TrayIcon>
        <TrayIcon><Monitor size={21} strokeWidth={1.3} /></TrayIcon>
        <TrayIcon><VolumeX size={20} strokeWidth={1.3} /></TrayIcon>
        <Lang>FRA</Lang>
        <Clock>08:20<br />2024-10-24</Clock>
        <Notice>
          <svg width="22" height="24" viewBox="0 0 22 24">
            <rect x="1" y="1" width="20" height="20" fill="#fff" />
            <path d="M4 6h14M4 10h14M4 14h9" stroke="#333" strokeWidth="1.400" />
          </svg>
          <NoticeBadge>20</NoticeBadge>
        </Notice>
      </Taskbar>
    </Screen>
  );
};

export default App;
